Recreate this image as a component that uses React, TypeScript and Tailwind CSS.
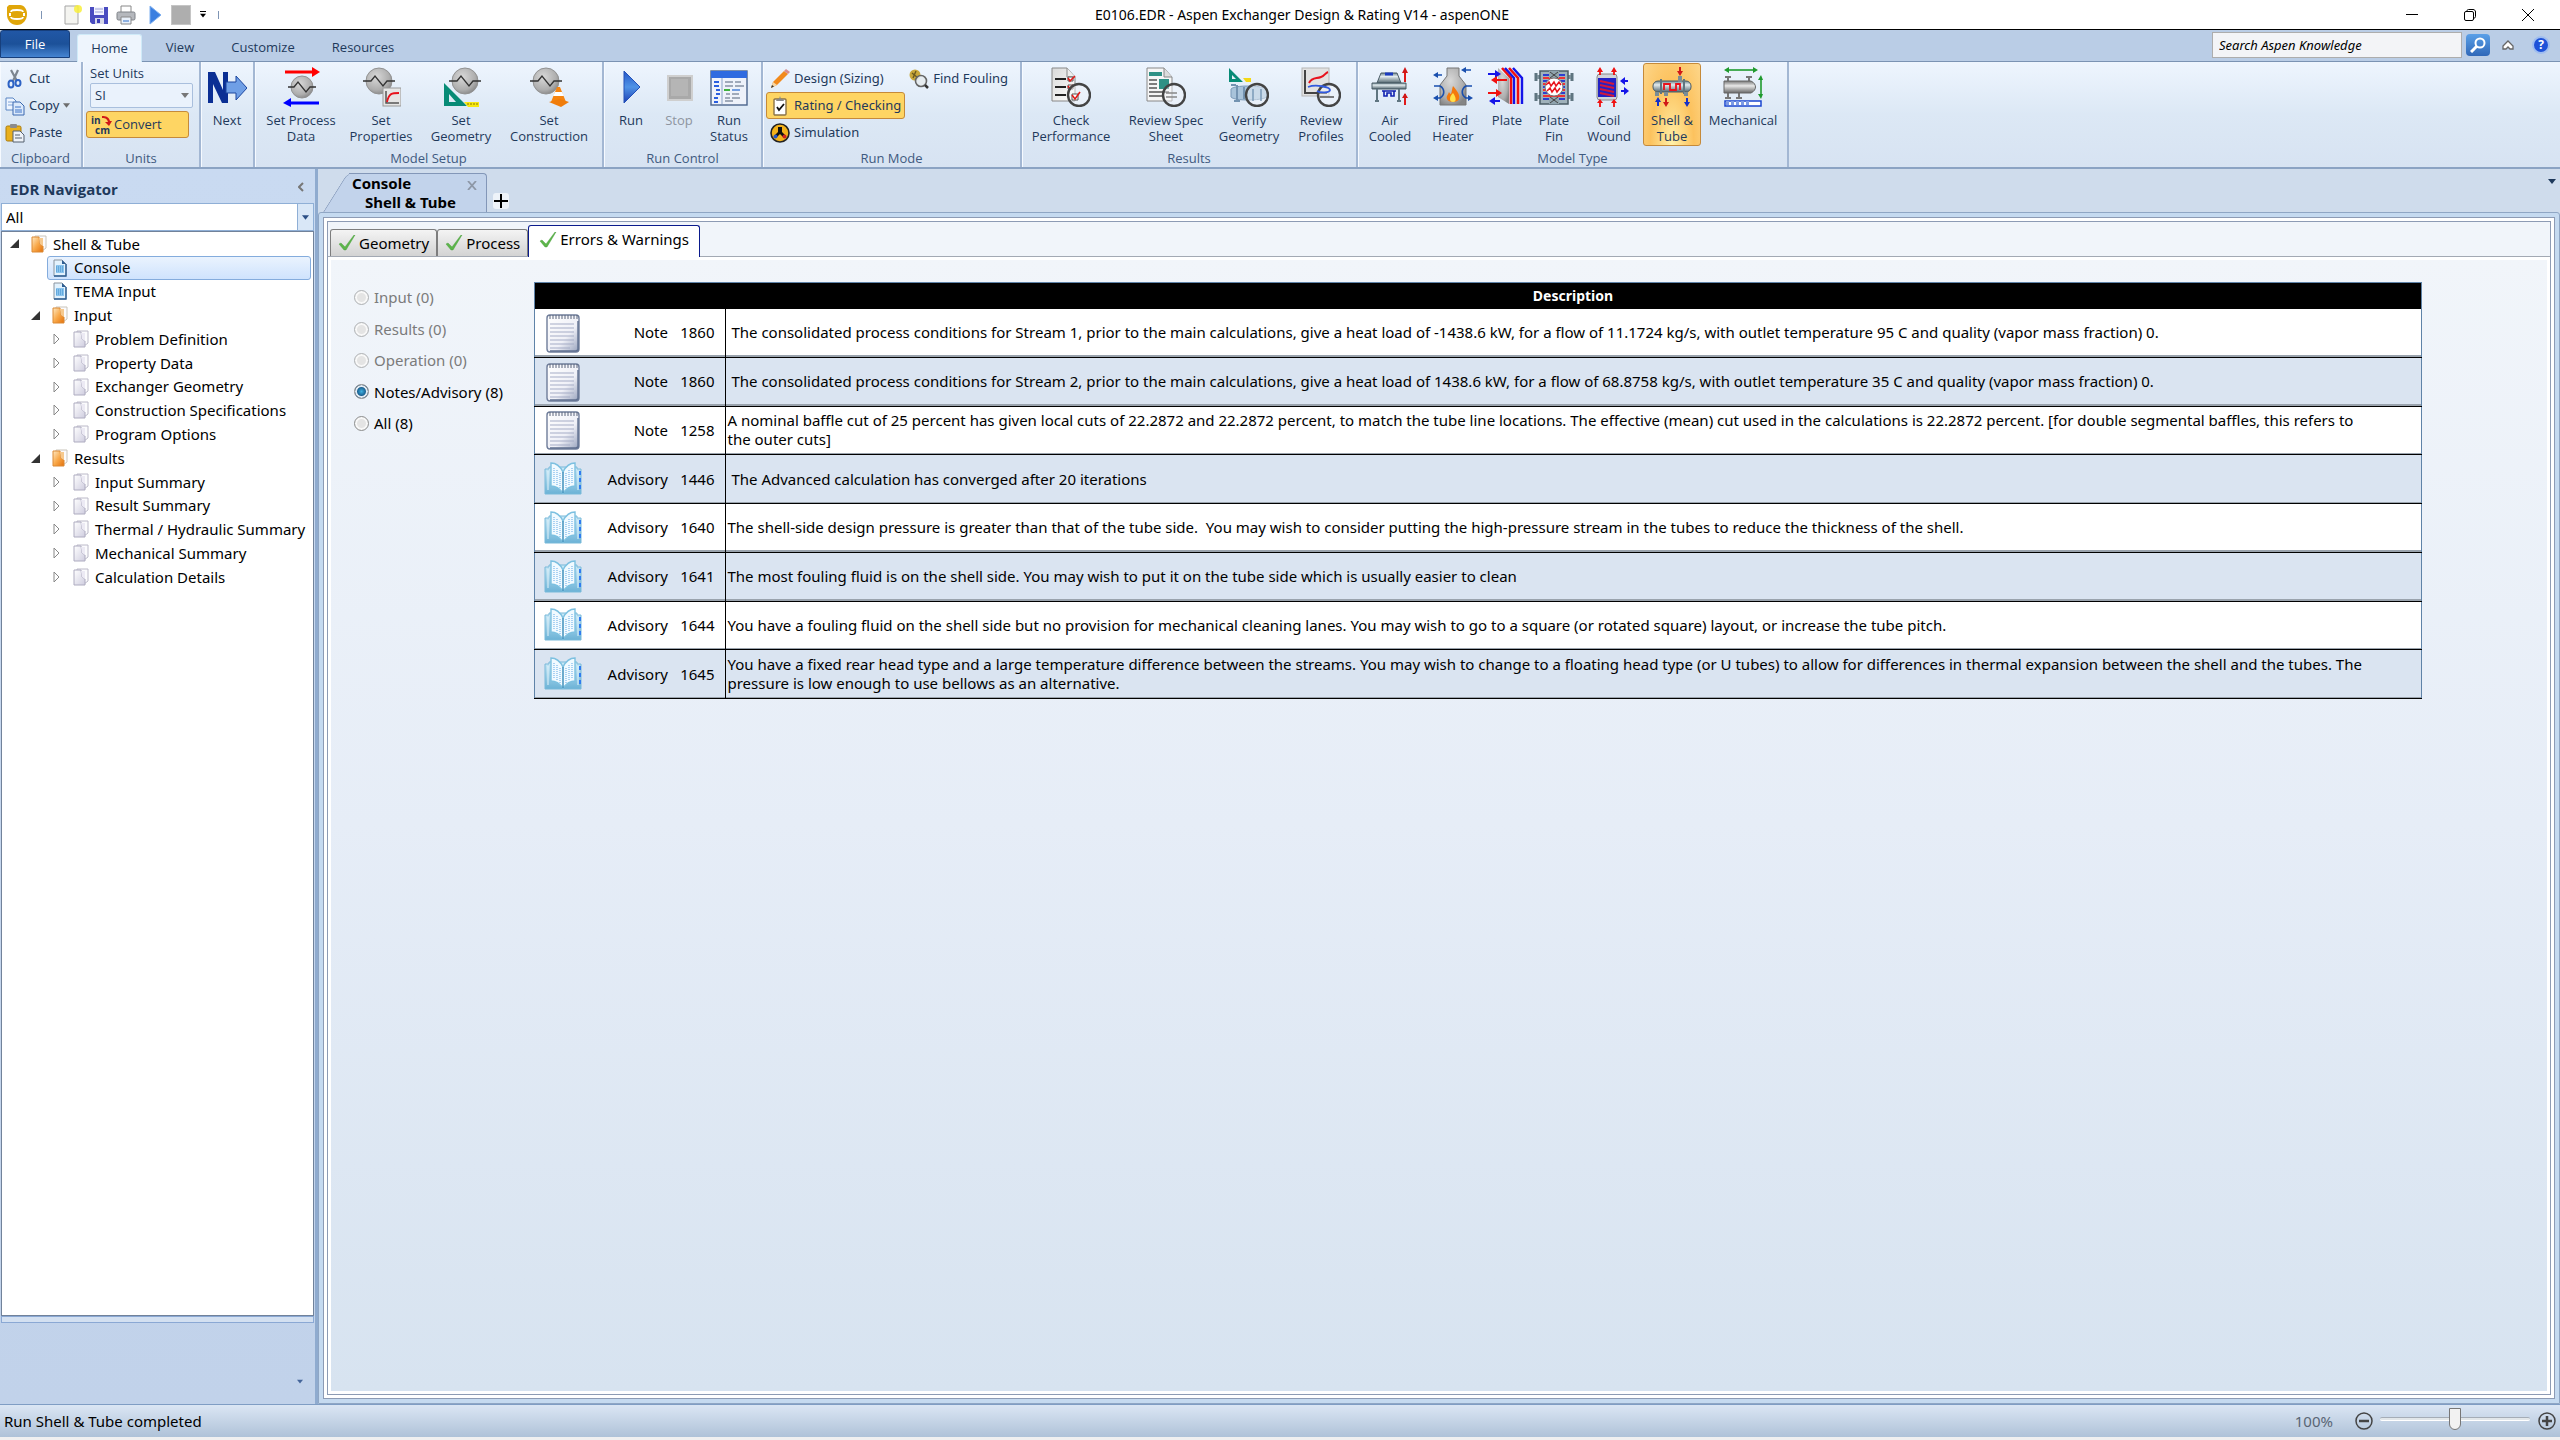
import type { ReactNode } from "react";
import { useState } from "react";

/* ---------- shared icon parts ---------- */

function Gradients() {
	return (
		<svg width="0" height="0" className="absolute" aria-hidden="true">
			<defs>
				<radialGradient id="sphere" cx="0.4" cy="0.35" r="0.7">
					<stop offset="0" stopColor="#d8d8d8" />
					<stop offset="0.7" stopColor="#aeaeae" />
					<stop offset="1" stopColor="#858585" />
				</radialGradient>
				<linearGradient id="steel" x1="0" y1="0" x2="0" y2="1">
					<stop offset="0" stopColor="#6f8790" />
					<stop offset="0.35" stopColor="#e2ebee" />
					<stop offset="1" stopColor="#52666f" />
				</linearGradient>
				<linearGradient id="gray" x1="0" y1="0" x2="0" y2="1">
					<stop offset="0" stopColor="#777" />
					<stop offset="0.4" stopColor="#e8e8e8" />
					<stop offset="1" stopColor="#666" />
				</linearGradient>
				<linearGradient id="blue" x1="0" y1="0" x2="0" y2="1">
					<stop offset="0" stopColor="#2456c8" />
					<stop offset="0.5" stopColor="#4f93e6" />
					<stop offset="1" stopColor="#1d3fb4" />
				</linearGradient>
				<linearGradient id="paper" x1="0" y1="0" x2="1" y2="1">
					<stop offset="0" stopColor="#d9d9d9" />
					<stop offset="1" stopColor="#ffffff" />
				</linearGradient>
				<linearGradient id="orange" x1="0" y1="0" x2="1" y2="1">
					<stop offset="0" stopColor="#fde9c4" />
					<stop offset="0.5" stopColor="#f9a94a" />
					<stop offset="1" stopColor="#e2700b" />
				</linearGradient>
				<linearGradient id="lilac" x1="0" y1="0" x2="1" y2="1">
					<stop offset="0" stopColor="#ffffff" />
					<stop offset="1" stopColor="#cfcddf" />
				</linearGradient>
				<linearGradient id="notepad" x1="0" y1="0" x2="1" y2="1">
					<stop offset="0" stopColor="#ffffff" />
					<stop offset="0.6" stopColor="#eff0f7" />
					<stop offset="1" stopColor="#95a0bb" />
				</linearGradient>
				<linearGradient id="book" x1="0" y1="0" x2="0" y2="1">
					<stop offset="0" stopColor="#cdeaf7" />
					<stop offset="1" stopColor="#6bb2d6" />
				</linearGradient>
			</defs>
		</svg>
	);
}

function Icon40({ children }: { children: ReactNode }) {
	return (
		<svg viewBox="0 0 40 40" className="size-10 shrink-0" aria-hidden="true">
			{children}
		</svg>
	);
}

function Icon20({ children }: { children: ReactNode }) {
	return (
		<svg viewBox="0 0 20 20" className="size-5 shrink-0" aria-hidden="true">
			{children}
		</svg>
	);
}

function Sphere({ cx, cy, r = 13 }: { cx: number; cy: number; r?: number }) {
	return (
		<g>
			<circle cx={cx} cy={cy} r={r} fill="url(#sphere)" stroke="#929292" />
			<path
				d={`M${cx - r - 3} ${cy}h${r - 5}l4 -5l8 10l4 -5h${r - 5}`}
				fill="none"
				stroke="#333"
				strokeWidth="1.3"
			/>
		</g>
	);
}

function Loupe() {
	return (
		<circle cx="28" cy="28" r="11" fill="#f4f6fa" fillOpacity="0.45" stroke="#444" strokeWidth="2.4" />
	);
}

/* ---------- ribbon icons ---------- */

const NextIcon = () => (
	<Icon40>
		<path d="M1 5h7l8 18V5h5v31h-6L6 17v19H1z" fill="#0b2f94" />
		<path d="M19 15h10V9l11 12l-11 12v-7H19z" fill="#6f9fe6" stroke="#1c469f" />
	</Icon40>
);

const ProcessDataIcon = () => (
	<Icon40>
		<path d="M4 5h29" stroke="#f00" strokeWidth="3" />
		<path d="M31 0l8 5l-8 5z" fill="#f00" />
		<Sphere cx={21} cy={20} r={11} />
		<path d="M9 36h29" stroke="#00f" strokeWidth="3" />
		<path d="M10 31l-8 5l8 4z" fill="#00f" />
	</Icon40>
);

const PropertiesIcon = () => (
	<Icon40>
		<Sphere cx={18} cy={14} />
		<rect x="22" y="21" width="18" height="18" fill="#e5e5e5" stroke="#999" />
		<path d="M25 24v12h13" fill="none" stroke="#555" strokeWidth="1.5" />
		<path d="M26 35c2-9 5-9 12-9" fill="none" stroke="#e8121c" strokeWidth="1.8" />
	</Icon40>
);

const GeometryIcon = () => (
	<Icon40>
		<Sphere cx={24} cy={14} />
		<path d="M3 16v23h23zm5 11l7 8H8z" fill="#078b76" fillRule="evenodd" />
		<path d="M23 35h15v5H27z" fill="#f7e811" />
		<path d="M27 36v2m3-2v2m3-2v2m3-2v2" stroke="#8a7a00" />
	</Icon40>
);

const ConstructionIcon = () => (
	<Icon40>
		<Sphere cx={17} cy={14} />
		<path d="M28 20h3l6 15H22z" fill="#f58410" />
		<path d="M26 25h7l2 4H24z" fill="#fff" />
		<path d="M20 35l11-3l9 3l-8 5z" fill="#f07c0a" />
	</Icon40>
);

const RunIcon = () => (
	<Icon40>
		<path d="M13 4l16 16l-16 16z" fill="url(#blue)" stroke="#2350b8" />
	</Icon40>
);

const StopIcon = () => (
	<Icon40>
		<rect x="9" y="9" width="24" height="24" fill="#a9a9a9" stroke="#cfcfcf" strokeWidth="2" />
		<rect x="12" y="12" width="17" height="17" fill="#b5b5b5" />
	</Icon40>
);

const StatusIcon = () => (
	<Icon40>
		<rect x="2" y="4" width="36" height="34" fill="#eef2fa" stroke="#4a648c" strokeWidth="1.4" />
		<path d="M2 4h36v7H2z" fill="#2f6be0" />
		<path d="M13 11v26" stroke="#8aa3c8" />
		<path d="M5 15h5M5 19h5M7 23h4M7 27h4M5 31h4M5 35h4" stroke="#2a5fe0" strokeWidth="2" />
		<path d="M16 15h8m2 0h6M16 19h8m2 0h9M17 27h4m2 0h7M16 31h5m2 0h8M16 34h8" stroke="#8793a5" strokeWidth="1.5" />
		<path d="M15 23h6" stroke="#3db23d" strokeWidth="2" />
		<path d="M23 23h8" stroke="#4a83d8" strokeWidth="1.5" />
	</Icon40>
);

const CheckPerfIcon = () => (
	<Icon40>
		<path d="M1 1h15l8 9v24H1z" fill="url(#paper)" stroke="#888" />
		<path d="M16 1v9h8" fill="#eee" stroke="#888" />
		<path d="M4 12h11M4 20h11M4 28h11" stroke="#222" strokeWidth="2" />
		<path d="M17 10h5v4h-5zM17 18h5v4h-5z" fill="#fff" stroke="#555" />
		<path d="M17 11l2 3l5-5M17 19l2 3l3-4" fill="none" stroke="#e01a1a" strokeWidth="1.6" />
		<Loupe />
		<path d="M21 27h6v6h-6z" fill="#fff" stroke="#555" />
		<path d="M21 28l3 4l5-7" fill="none" stroke="#e01a1a" strokeWidth="1.6" />
	</Icon40>
);

const SpecSheetIcon = () => (
	<Icon40>
		<path d="M1 1h17l8 9v24H1z" fill="#f6f6f6" stroke="#888" />
		<path d="M18 1v9h8" fill="#ddd" stroke="#888" />
		<path d="M3 5h13v4H3zM13 12h10v10H13z" fill="#2f9185" />
		<path d="M3 13h8M3 17h8M3 21h8M3 25h20M3 29h14" stroke="#555" strokeWidth="1.7" />
		<Loupe />
		<path d="M20 26h11M20 30h11" stroke="#888" strokeWidth="1.5" />
	</Icon40>
);

const VerifyIcon = () => (
	<Icon40>
		<path d="M0 1v14h14zm3 7l4 4H3z" fill="#078b76" fillRule="evenodd" />
		<path d="M14 11h8v4h-5z" fill="#f3d817" />
		<path d="M2 22c3-4 30-4 36 0v8c-6 4-33 4-36 0z" fill="#a8c3da" stroke="#7b9ab8" />
		<path d="M8 18v16M5 34h6M15 20v12M2 18h5" stroke="#7393b1" strokeWidth="2" />
		<Loupe />
		<path d="M24 22v12M32 22v12" stroke="#7b9ab8" strokeWidth="1.5" />
	</Icon40>
);

const ProfilesIcon = () => (
	<Icon40>
		<rect x="1" y="1" width="27" height="28" fill="#e2e2e2" stroke="#b5b5b5" />
		<path d="M4 3v23h22" fill="none" stroke="#444" strokeWidth="2" />
		<path d="M8 16c3-6 7-4 12-6c4-1 4-4 7-5" fill="none" stroke="#e8121c" strokeWidth="2" />
		<Loupe />
		<path d="M7 20c8-3 22 0 22 3s-10 3-13 1" fill="none" stroke="#3159dd" strokeWidth="1.8" />
		<path d="M19 30h14" stroke="#555" strokeWidth="1.5" />
	</Icon40>
);

const AirIcon = () => (
	<Icon40>
		<path d="M11 6h16l4 10H7z" fill="url(#steel)" stroke="#4a5c66" />
		<path d="M15 7h8" stroke="#1a3bc0" strokeWidth="3" />
		<path d="M2 16h34v6H2z" fill="url(#steel)" stroke="#4a5c66" />
		<path d="M7 22v12M29 22v12M5 34h4M27 34h4" stroke="#5f7580" strokeWidth="2" />
		<path d="M12 24h14M14 24v5h3v-3h4v3h3v-5" fill="none" stroke="#1020b0" strokeWidth="1.6" />
		<path d="M35 15V4M35 38V27" stroke="#e01a1a" strokeWidth="2" />
		<path d="M32 6l3-6l3 6zM32 31l3-5l3 5z" fill="#d01818" />
	</Icon40>
);

const HeaterIcon = () => (
	<Icon40>
		<path d="M14 1h12v8l7 9v20H7V18l7-9z" fill="url(#sphere)" stroke="#777" />
		<path d="M20 19c5 6 7 9 6 13c-1 4-11 4-12 0c-1-3 1-4 2-7c1 2 2 2 2 2c1-3 1-5 2-8z" fill="#f4780d" />
		<path d="M20 26c3 4 4 9 0 9s-4-5 0-9z" fill="#ffe14a" />
		<path d="M9 8H3M38 3h-6M1 19h6c5 3 5 9 0 12H3M39 19h-6c-5 3-5 9 0 12h4" fill="none" stroke="#194fae" strokeWidth="1.6" />
		<path d="M5 5v6L0 8zM33 0v6l-5-3zM5 28v6l-5-3zM35 28v6l5-3z" fill="#194fae" />
	</Icon40>
);

const PlateIcon = () => (
	<Icon40>
		<path d="M11 1l11 10v26l-11-7z" fill="url(#sphere)" />
		<path d="M15 1l9 10v26M22 1l9 10v26" fill="none" stroke="#f01010" strokeWidth="2.6" />
		<path d="M18 1l9 10v26M26 1l9 10v26" fill="none" stroke="#1414e8" strokeWidth="2.4" />
		<path d="M1 7h9M4 34h9" stroke="#1414e8" strokeWidth="2" />
		<path d="M8 3l6 4l-6 4zM8 30l-6 4l6 4z" fill="#1414e8" />
		<path d="M6 13h14M1 26h10" stroke="#f01010" strokeWidth="2" />
		<path d="M10 9l-6 4l6 4zM9 22l6 4l-6 4z" fill="#f01010" />
	</Icon40>
);

const PlateFinIcon = () => (
	<Icon40>
		<path d="M2 6v8M2 26v8M38 6v8M38 26v8" stroke="#5f7580" strokeWidth="3" />
		<path d="M3 10h34M3 30h34" stroke="#7d929c" strokeWidth="4" />
		<rect x="6" y="4" width="28" height="33" fill="#9fb1ba" stroke="#4a5c66" strokeWidth="1.5" />
		<path d="M9 8h22M9 14h22M9 20h22M9 26h22M9 32h22" stroke="#2d3ed0" strokeWidth="1.8" />
		<path d="M9 11h22M9 17h22M9 23h22M9 29h22" stroke="#e33" strokeWidth="1.8" />
		<path d="M15 4h10v7H15zM15 30h10v7H15z" fill="#8fa3ad" />
		<path d="M16 5l8 6M24 5l-8 6M16 30l8 6M24 30l-8 6" stroke="#444" />
		<circle cx="20" cy="20" r="9" fill="#fff" stroke="#777" />
		<path d="M12 18l3-3l2 4l3-4l2 4l3-4l2 3M13 24l3-3l2 4l3-4l2 4l3-4" fill="none" stroke="#e8121c" strokeWidth="1.5" />
	</Icon40>
);

const CoilIcon = () => (
	<Icon40>
		<rect x="8" y="7" width="20" height="26" rx="3" fill="#cfd3da" stroke="#888" />
		<rect x="9" y="11" width="18" height="19" fill="#2222c4" />
		<path d="M11 14l14 3M11 18l14 3M11 22l14 3M11 26l14 3" stroke="#d4183a" strokeWidth="2.2" />
		<path d="M11 8V2M25 8V2M11 40v-6M25 40v-6" stroke="#f01010" strokeWidth="1.8" />
		<path d="M8 5l3-5l3 5zM22 5l3-5l3 5zM8 36l3-4l3 4zM22 36l3-4l3 4z" fill="#f01010" />
		<path d="M34 14h5M32 24h4" stroke="#1414e8" strokeWidth="2" />
		<path d="M36 10l-5 4l5 4zM35 20l5 4l-5 4z" fill="#1414e8" />
	</Icon40>
);

const ShellTubeIcon = () => (
	<Icon40>
		<rect x="1" y="14" width="38" height="11" rx="5" fill="url(#steel)" stroke="#4a5c66" />
		<path d="M9 12v15M32 12v15" stroke="#5f7580" strokeWidth="2" />
		<path d="M28 9v6M5 25v4M14 25v4M34 25v4" stroke="#7a8d96" strokeWidth="4" />
		<path d="M12 23v-6h6v6h6v-6h4v6" fill="none" stroke="#e8121c" strokeWidth="1.8" />
		<path d="M28 0v6M14 31v5" stroke="#d01818" strokeWidth="2" />
		<path d="M25 4l3 5l3-5zM11 35l3 5l3-5z" fill="#d01818" />
		<path d="M6 39v-5M35 31v5" stroke="#1430c8" strokeWidth="2" />
		<path d="M3 35l3-5l3 5zM32 35l3 5l3-5z" fill="#1430c8" />
	</Icon40>
);

const MechanicalIcon = () => (
	<Icon40>
		<path d="M5 3h26" stroke="#1f9a2e" strokeWidth="1.6" />
		<path d="M6 0v6l-5-3zM30 0v6l5-3zM35 13l3-5l2 5zM35 27l3 5l2-5z" fill="#1f9a2e" />
		<path d="M38 11v18" stroke="#1f9a2e" strokeWidth="1.6" />
		<path d="M5 10v5M26 10v5M5 25v5M16 25v5M2 10h6M23 10h6M2 31h6M13 31h6" stroke="#777" strokeWidth="2" />
		<path d="M1 14h27c6 3 6 9 0 12H1z" fill="url(#gray)" stroke="#666" />
		<path d="M2 34h36v5H2z" fill="#fff" stroke="#1a46d0" strokeWidth="1.5" />
		<path d="M3 36h25" stroke="#7c9ae4" strokeWidth="4" strokeDasharray="3 2" />
	</Icon40>
);

const CutIcon = () => (
	<Icon20>
		<path d="M6 1l6 11M13 1L8 12" stroke="#7c8590" strokeWidth="2.2" />
		<ellipse cx="6" cy="15" rx="2.5" ry="3.5" fill="none" stroke="#2d62c4" strokeWidth="2" />
		<ellipse cx="13" cy="14" rx="2.5" ry="3" fill="none" stroke="#2d62c4" strokeWidth="2" />
	</Icon20>
);

const CopyIcon = () => (
	<Icon20>
		<path d="M1 2h7l3 3v9H1z" fill="#eef5ff" stroke="#5b86c4" />
		<path d="M3 6h5M3 9h5" stroke="#7fa3d8" />
		<path d="M8 6h7l4 4v9H8z" fill="#dbe9fb" stroke="#3a68b0" />
		<path d="M10 11h6M10 14h7M10 16h7" stroke="#3f74c8" />
	</Icon20>
);

const PasteIcon = () => (
	<Icon20>
		<rect x="1" y="3" width="15" height="15" rx="1.5" fill="#e9b01d" stroke="#a97a0d" />
		<rect x="5" y="1" width="7" height="4" rx="1" fill="#8c8c8c" />
		<path d="M8 8h7l4 4v7H8z" fill="#eef2f8" stroke="#55606f" />
		<path d="M10 12h5M10 15h7" stroke="#55606f" />
	</Icon20>
);

const PencilIcon = () => (
	<Icon20>
		<path d="M1 19l2-6L14 2l4 3L7 16z" fill="#f28a1c" />
		<path d="M14 2l2-2l4 3l-2 2z" fill="#d98d8d" />
		<path d="M1 19l2-6l4 3z" fill="#f5d8a8" />
		<path d="M1 19l1-3l2 1.500z" fill="#333" />
	</Icon20>
);

const ClipboardIcon = () => (
	<Icon20>
		<rect x="4" y="3" width="12" height="16" rx="1" fill="#fff" stroke="#8b7347" strokeWidth="1.4" />
		<path d="M6 5h8l-1-2h-2l-1-3l-1 3H7z" fill="#888" />
		<path d="M7 11l2 3l5-6" fill="none" stroke="#111" strokeWidth="1.8" />
	</Icon20>
);

const SimulationIcon = () => (
	<Icon20>
		<circle cx="10" cy="10" r="9" fill="#f4b21a" stroke="#222" strokeWidth="1.6" />
		<path d="M8 4h4v5l4 4l-2 2l-4-4l-4 4l-2-2l4-4z" fill="#111" />
		<circle cx="5.500" cy="13.500" r="2" fill="#2556c8" />
		<circle cx="14.500" cy="13.500" r="2" fill="#c22" />
	</Icon20>
);

const FoulingIcon = () => (
	<Icon20>
		<circle cx="6" cy="6" r="5.500" fill="#c9a83a" />
		<path d="M3 4l6 5M7 2L4 9" stroke="#6b5a20" strokeWidth="1.4" />
		<circle cx="12" cy="12" r="5.500" fill="#e6ebee" fillOpacity="0.9" stroke="#666" strokeWidth="1.6" />
		<path d="M16 16l3 3" stroke="#333" strokeWidth="2.5" />
	</Icon20>
);

/* ---------- tree and table icons ---------- */

function FolderIcon({ gray }: { gray?: boolean }) {
	return (
		<svg viewBox="0 0 16 18" className="h-[18px] w-4 shrink-0" aria-hidden="true">
			<path d="M4 1h11v12l-4 3H4z" fill="#fbfbfd" stroke={gray ? "#bcbac9" : "#c9c4bb"} />
			<path
				d="M1 2h7l1 7l3 2v6H1z"
				fill={gray ? "url(#lilac)" : "url(#orange)"}
				stroke={gray ? "#aeacc0" : "#dc8a35"}
			/>
			<path d="M8 3l1 6l3 2V3z" fill={gray ? "#eceaf4" : "#f6c98e"} />
		</svg>
	);
}

const DocIcon = () => (
	<svg viewBox="0 0 16 18" className="h-[18px] w-4 shrink-0" aria-hidden="true">
		<path d="M2 1h8l4 4v12H2z" fill="#e3f2fd" stroke="#8a949f" />
		<path d="M14 5v12H2" fill="none" stroke="#2d5f95" strokeWidth="1.4" />
		<path d="M10 1v4h4z" fill="#2d5f95" />
		<path d="M4 6h8v8H4z" fill="#8cc5ee" />
		<path d="M4 8h8M4 10h8M4 12h8" stroke="#3d8ccb" strokeDasharray="1 1" />
	</svg>
);

const NoteIcon = () => (
	<svg viewBox="0 0 36 40" className="h-10 w-9" aria-hidden="true">
		<rect x="2" y="2" width="32" height="37" rx="3" fill="url(#notepad)" stroke="#6f7d9a" strokeWidth="1.4" />
		<path d="M33 8v29l-2 1H5" fill="none" stroke="#5f6f8f" strokeWidth="1.4" />
		<path d="M5 2v4M8 2v4M11 2v4M14 2v4M17 2v4M20 2v4M23 2v4M26 2v4M29 2v4M32 2v4" stroke="#5a647a" />
		<path d="M5 11h24M5 15h24M5 19h24M5 23h24M5 27h24M5 31h24M5 35h20" stroke="#a5acc6" />
	</svg>
);

const BookIcon = () => (
	<svg viewBox="0 0 38 34" className="h-[34px] w-[38px]" aria-hidden="true">
		<path d="M1 7h4V5h28v2h4v25H1z" fill="url(#book)" stroke="#79b9d9" />
		<path d="M19 10C16 4 11 1 7 1v23c5 0 9 3 12 7c3-4 7-7 12-7V1c-4 0-9 3-12 9z" fill="#f1faff" stroke="#7cc0e0" strokeWidth="1.4" />
		<path d="M19 10v21" stroke="#4b97c0" strokeWidth="1.6" />
		<path d="M4 9v19M34 9v19" stroke="#e4f4fb" />
		<path d="M10 6v16M13 8v16M16 11v15M22 11v15M25 8v16M28 6v16" stroke="#8cc0ee" strokeWidth="1.4" strokeDasharray="1 1" />
		<path d="M36 9v4M36 16v4M36 23v4" stroke="#2f7cf0" strokeWidth="2" />
	</svg>
);

const CheckMark = () => (
	<svg viewBox="0 0 18 16" className="h-4 w-[18px] shrink-0" aria-hidden="true">
		<path d="M1 9l2-1l4 4L16 0h1L8 15H6z" fill="#5cb54a" stroke="#46993a" strokeWidth="0.4" />
	</svg>
);

function Triangle({ className = "w-2" }: { className?: string }) {
	return (
		<svg viewBox="0 0 8 5" className={`h-[5px] ${className}`} aria-hidden="true">
			<path d="M0 0h8L4 5z" fill="currentColor" />
		</svg>
	);
}

/* ---------- title bar ---------- */

function TitleBar() {
	return (
		<header className="flex h-[30px] items-center border-b border-black bg-white">
			<div className="flex flex-1 items-center">
				<svg viewBox="0 0 20 20" className="ml-[7px] size-5" aria-label="aspenONE">
					<path d="M2 0h11c4 0 7 4 7 9c0 6-4 11-10 11C4 20 0 15 0 10V2z" fill="#e0a60a" />
					<path d="M4 7c0-2 3-2 6-2s6 0 6 2M4 12c0 2 3 2 6 2s6 0 6-2" fill="none" stroke="#fff" strokeWidth="1.8" />
					<path d="M3 8v3M17 8v3" stroke="#fff" strokeWidth="2" />
				</svg>
				<span className="ml-[14px] h-2 w-px bg-[#7f95b5]" />
				<button type="button" aria-label="New" className="ml-5">
					<svg viewBox="0 0 20 20" className="size-5">
						<path d="M3 1h13v18H3z" fill="#f4f4f0" stroke="#a5a5a5" />
						<circle cx="16" cy="4" r="4" fill="#f8ef3a" fillOpacity="0.85" />
					</svg>
				</button>
				<button type="button" aria-label="Save" className="ml-[7px]">
					<svg viewBox="0 0 20 20" className="size-5">
						<path d="M1 2h18v17H3l-2-2z" fill="#4a4cc0" />
						<path d="M5 2h10v8H5z" fill="#f4f4ff" />
						<path d="M6 4h8M6 7h8" stroke="#9aa0d8" />
						<path d="M6 13h9v6H6z" fill="#d5d7e8" />
						<path d="M8 14h3v4H8z" fill="#3d3fb8" />
					</svg>
				</button>
				<button type="button" aria-label="Print" className="ml-[7px]">
					<svg viewBox="0 0 20 20" className="size-5">
						<path d="M5 1h10v7H5z" fill="#fff" stroke="#888" />
						<rect x="1" y="7" width="18" height="8" rx="1.5" fill="#b5b8bd" stroke="#7e8288" />
						<path d="M5 12h10v7H5z" fill="#e8f0fa" stroke="#888" />
						<path d="M7 16h6" stroke="#6f9bd8" strokeWidth="1.5" />
					</svg>
				</button>
				<button type="button" aria-label="Run" className="ml-[9px]">
					<svg viewBox="0 0 20 20" className="size-5">
						<path d="M5 1l11 9L5 19z" fill="#3b7fe0" stroke="#7fb0f0" />
					</svg>
				</button>
				<button type="button" aria-label="Stop" className="ml-[6px]">
					<span className="block size-5 border border-[#c5c5c5] bg-[#aeaeae]" />
				</button>
				<button type="button" aria-label="Customize toolbar" className="ml-[9px] text-black">
					<span className="mb-px block h-px w-[6px] bg-black" />
					<Triangle className="w-[6px]" />
				</button>
				<span className="ml-3 h-2 w-px bg-[#7f95b5]" />
			</div>
			<h1 className="pl-[70px] font-['Noto_Sans',sans-serif] text-sm text-black">
				E0106.EDR - Aspen Exchanger Design &amp; Rating V14 - aspenONE
			</h1>
			<div className="flex flex-1 items-center justify-end gap-[46px] pr-[26px]">
				<button type="button" aria-label="Minimize">
					<span className="block h-px w-3 bg-black" />
				</button>
				<button type="button" aria-label="Restore">
					<svg viewBox="0 0 12 12" className="size-3" fill="none" stroke="#000">
						<rect x="0.500" y="2.500" width="9" height="9" rx="1.500" />
						<path d="M3 2.500V2c0-1 0.500-1.500 1.500-1.500H9c1.500 0 2.500 1 2.500 2.500v4.500c0 1-0.500 1.500-1.500 1.500" />
					</svg>
				</button>
				<button type="button" aria-label="Close">
					<svg viewBox="0 0 12 12" className="size-3" fill="none" stroke="#000">
						<path d="M0 0l12 12M12 0L0 12" />
					</svg>
				</button>
			</div>
		</header>
	);
}

/* ---------- ribbon ---------- */

function RibbonTabs() {
	return (
		<nav className="flex h-8 items-end border-b border-[#7b93b3] bg-[#bacde6] text-[13px]">
			<button
				type="button"
				className="mb-[3px] h-7 w-[70px] rounded-t-[3px] border border-[#173f7c] bg-linear-to-b from-[#2157a6] via-[#1c5199] to-[#4584d2] pt-px text-white"
			>
				File
			</button>
			<button
				type="button"
				className="-mb-px ml-[7px] h-7 w-[65px] rounded-t-[3px] border border-b-0 border-[#cfeaf8] bg-[#eef5fd]"
			>
				Home
			</button>
			<button type="button" className="h-[26px] w-[76px]">
				View
			</button>
			<button type="button" className="h-[26px] w-[90px]">
				Customize
			</button>
			<button type="button" className="h-[26px] w-[110px]">
				Resources
			</button>
			<div className="mb-[3px] ml-auto flex items-center pr-[10px]">
				<input
					aria-label="Search Aspen Knowledge"
					placeholder="Search Aspen Knowledge"
					className="h-[26px] w-[250px] border border-[#adadad] bg-[#f3f4f7] px-[6px] font-['Noto_Sans',sans-serif] text-black italic placeholder:text-black"
				/>
				<button
					type="button"
					aria-label="Search"
					className="ml-1 grid h-[22px] w-6 place-items-center rounded-sm bg-linear-to-b from-[#5aa0e8] to-[#3068b8]"
				>
					<svg viewBox="0 0 16 16" className="size-4" fill="none" stroke="#fff" strokeWidth="2">
						<circle cx="10" cy="6" r="4.500" />
						<path d="M7 9l-6 6" strokeWidth="3" />
					</svg>
				</button>
				<button type="button" aria-label="Collapse ribbon" className="ml-3">
					<svg viewBox="0 0 12 10" className="h-[10px] w-3" fill="#fff" stroke="#666" strokeWidth="1.3">
						<path d="M1 6l5-5l5 5v3H8L6 7L4 9H1z" />
					</svg>
				</button>
				<button
					type="button"
					aria-label="Help"
					className="ml-[18px] size-[18px] rounded-full border-2 border-[#9fbdf0] bg-[#1f52d8] text-[12px] leading-3 font-bold text-white"
				>
					?
				</button>
			</div>
		</nav>
	);
}

function Group({
	label,
	width,
	children,
}: {
	label: string;
	width: string;
	children: ReactNode;
}) {
	return (
		<section
			className={`flex shrink-0 flex-col border-r-2 border-[#a3b7d3] shadow-[inset_1px_0_0_#f6faff] ${width}`}
		>
			<div className="flex flex-1">{children}</div>
			<div className="h-[18px] text-center leading-[18px] text-[#3f5a80]">{label}</div>
		</section>
	);
}

function BigButton({
	icon,
	lines,
	width,
	active,
	disabled,
}: {
	icon: ReactNode;
	lines: string[];
	width: string;
	active?: boolean;
	disabled?: boolean;
}) {
	return (
		<div className={`flex justify-center pt-px ${width}`}>
			<button
				type="button"
				disabled={disabled}
				className={`flex h-[83px] flex-col items-center rounded-[3px] border pt-[3px] leading-4 whitespace-nowrap ${
					active
						? "w-[58px] border-[#c58a3a] bg-[radial-gradient(ellipse_at_bottom,#fff0a8,#fcc25e_55%,#fdd68a)]"
						: "border-transparent"
				} ${disabled ? "text-[#8e959f]" : ""}`}
			>
				{icon}
				<span className="pt-[5px]">
					{lines.map((line) => (
						<span key={line} className="block">
							{line}
						</span>
					))}
				</span>
			</button>
		</div>
	);
}

function SmallButton({
	icon,
	label,
	active,
}: {
	icon: ReactNode;
	label: string;
	active?: boolean;
}) {
	return (
		<button
			type="button"
			className={`flex h-[27px] items-center gap-1 rounded-[3px] border px-[3px] font-['Noto_Sans',sans-serif] whitespace-nowrap ${
				active ? "border-[#c58a3a] bg-[#fed563]" : "border-transparent"
			}`}
		>
			{icon}
			{label}
		</button>
	);
}

function Ribbon() {
	return (
		<div className="flex h-[107px] border-b-2 border-[#8ba3c3] bg-linear-to-b from-[#eef5fe] via-[#dce8f5] to-[#d7e3f2] text-[13px]">
			<Group label="Clipboard" width="w-[83px]">
				<div className="flex flex-col pt-[3px] pl-px">
					<SmallButton icon={<CutIcon />} label="Cut" />
					<div className="flex items-center">
						<SmallButton icon={<CopyIcon />} label="Copy" />
						<Triangle className="w-[7px] text-[#6d6d6d]" />
					</div>
					<SmallButton icon={<PasteIcon />} label="Paste" />
				</div>
			</Group>
			<Group label="Units" width="w-[118px]">
				<div className="flex flex-col px-[3px] pt-[3px]">
					<label htmlFor="units" className="pl-1 leading-4">
						Set Units
					</label>
					<div className="mt-[2px] ml-1 grid items-center">
						<select
							id="units"
							className="h-[25px] w-[103px] appearance-none rounded-[2px] border border-[#a9bfdd] bg-[#eaf2fc] px-1 [grid-area:1/1]"
						>
							<option>SI</option>
						</select>
						<Triangle className="mr-1 w-2 justify-self-end text-[#777] [grid-area:1/1]" />
					</div>
					<button
						type="button"
						className="mt-[3px] flex h-[27px] w-[103px] items-center gap-[2px] rounded-[3px] border border-[#c58a3a] bg-[#fed563] pl-[3px]"
					>
						<svg viewBox="0 0 22 22" className="size-[22px] overflow-visible" aria-hidden="true">
							<text x="1" y="10" fontSize="10" fontWeight="bold" fill="#1e395b">in</text>
							<text x="5" y="20" fontSize="10" fontWeight="bold" fill="#1e395b">cm</text>
							<path d="M12 4c4 0 5 1 6 4h-3l4 4l3-5h-2c-1-4-4-5-8-5z" fill="#d01818" />
						</svg>
						Convert
					</button>
				</div>
			</Group>
			<Group label="" width="w-[54px]">
				<BigButton icon={<NextIcon />} lines={["Next"]} width="w-[52px]" />
			</Group>
			<Group label="Model Setup" width="w-[349px]">
				<BigButton icon={<ProcessDataIcon />} lines={["Set Process", "Data"]} width="w-[92px]" />
				<BigButton icon={<PropertiesIcon />} lines={["Set", "Properties"]} width="w-[68px]" />
				<BigButton icon={<GeometryIcon />} lines={["Set", "Geometry"]} width="w-[92px]" />
				<BigButton icon={<ConstructionIcon />} lines={["Set", "Construction"]} width="w-[84px]" />
			</Group>
			<Group label="Run Control" width="w-[159px]">
				<BigButton icon={<RunIcon />} lines={["Run"]} width="w-[54px]" />
				<BigButton icon={<StopIcon />} lines={["Stop"]} width="w-[42px]" disabled />
				<BigButton icon={<StatusIcon />} lines={["Run", "Status"]} width="w-[58px]" />
			</Group>
			<Group label="Run Mode" width="w-[259px]">
				<div className="flex flex-col items-start pt-[3px] pl-[3px]">
					<SmallButton icon={<PencilIcon />} label="Design (Sizing)" />
					<SmallButton icon={<ClipboardIcon />} label="Rating / Checking" active />
					<SmallButton icon={<SimulationIcon />} label="Simulation" />
				</div>
				<div className="pt-[3px]">
					<SmallButton icon={<FoulingIcon />} label="Find Fouling" />
				</div>
			</Group>
			<Group label="Results" width="w-[336px]">
				<BigButton icon={<CheckPerfIcon />} lines={["Check", "Performance"]} width="w-[98px]" />
				<BigButton icon={<SpecSheetIcon />} lines={["Review Spec", "Sheet"]} width="w-[92px]" />
				<BigButton icon={<VerifyIcon />} lines={["Verify", "Geometry"]} width="w-[74px]" />
				<BigButton icon={<ProfilesIcon />} lines={["Review", "Profiles"]} width="w-[70px]" />
			</Group>
			<Group label="Model Type" width="w-[431px]">
				<BigButton icon={<AirIcon />} lines={["Air", "Cooled"]} width="w-16" />
				<BigButton icon={<HeaterIcon />} lines={["Fired", "Heater"]} width="w-[62px]" />
				<BigButton icon={<PlateIcon />} lines={["Plate"]} width="w-[46px]" />
				<BigButton icon={<PlateFinIcon />} lines={["Plate", "Fin"]} width="w-12" />
				<BigButton icon={<CoilIcon />} lines={["Coil", "Wound"]} width="w-[62px]" />
				<BigButton icon={<ShellTubeIcon />} lines={["Shell &", "Tube"]} width="w-16" active />
				<BigButton icon={<MechanicalIcon />} lines={["Mechanical"]} width="w-[78px]" />
			</Group>
		</div>
	);
}

/* ---------- navigator ---------- */

type NavNode = {
	label: string;
	level: 0 | 1 | 2;
	kind: "folder" | "doc" | "group";
	selected?: boolean;
};

const NAV_NODES: NavNode[] = [
	{ label: "Shell & Tube", level: 0, kind: "folder" },
	{ label: "Console", level: 1, kind: "doc", selected: true },
	{ label: "TEMA Input", level: 1, kind: "doc" },
	{ label: "Input", level: 1, kind: "folder" },
	{ label: "Problem Definition", level: 2, kind: "group" },
	{ label: "Property Data", level: 2, kind: "group" },
	{ label: "Exchanger Geometry", level: 2, kind: "group" },
	{ label: "Construction Specifications", level: 2, kind: "group" },
	{ label: "Program Options", level: 2, kind: "group" },
	{ label: "Results", level: 1, kind: "folder" },
	{ label: "Input Summary", level: 2, kind: "group" },
	{ label: "Result Summary", level: 2, kind: "group" },
	{ label: "Thermal / Hydraulic Summary", level: 2, kind: "group" },
	{ label: "Mechanical Summary", level: 2, kind: "group" },
	{ label: "Calculation Details", level: 2, kind: "group" },
];

const INDENT = ["pl-0", "pl-[21px]", "pl-[42px]"];

function TreeRow({ node }: { node: NavNode }) {
	return (
		<li className={`flex min-h-0 flex-1 items-center ${INDENT[node.level]}`}>
			<span className="flex w-6 shrink-0 justify-center">
				{node.kind === "folder" && (
					<svg viewBox="0 0 9 9" className="size-[9px]" aria-hidden="true">
						<path d="M9 0v9H0z" fill="#333" />
					</svg>
				)}
				{node.kind === "group" && (
					<svg viewBox="0 0 7 12" className="h-3 w-[7px]" aria-hidden="true">
						<path d="M1 1l5 5l-5 5z" fill="#fff" stroke="#888" />
					</svg>
				)}
			</span>
			<button
				type="button"
				className={`flex h-full items-center gap-[6px] rounded-[3px] border pl-1 whitespace-nowrap ${
					node.selected
						? "mr-[2px] flex-1 border-[#84acdd] bg-linear-to-b from-[#eaf3fe] to-[#cfe3fd]"
						: "border-transparent"
				}`}
			>
				{node.kind === "doc" ? <DocIcon /> : <FolderIcon gray={node.kind === "group"} />}
				{node.label}
			</button>
		</li>
	);
}

function Navigator() {
	return (
		<aside className="flex w-[318px] shrink-0 flex-col border-r-[3px] border-[#8fabcf] bg-linear-to-b from-[#c9daf1] to-[#c1d2ea] px-px font-['Noto_Sans',sans-serif]">
			<div className="flex h-[34px] items-center justify-between pt-[6px] pr-[10px] pl-[9px]">
				<h2 className="font-['Open_Sans',sans-serif] text-[15px] font-bold">EDR Navigator</h2>
				<button type="button" aria-label="Collapse navigator" className="pb-1">
					<svg viewBox="0 0 6 10" className="h-[10px] w-[6px]" fill="none" stroke="#777" strokeWidth="2">
						<path d="M5 1L1 5l4 4" />
					</svg>
				</button>
			</div>
			<div className="grid items-center">
				<select
					aria-label="Filter"
					className="h-7 w-full appearance-none border border-[#8fafd6] bg-white px-1 text-[15px] text-black [grid-area:1/1]"
				>
					<option>All</option>
				</select>
				<span className="pointer-events-none grid h-full w-[17px] place-items-center justify-self-end border border-[#8fafd6] bg-[#d9e7f7] text-[#2c4f86] [grid-area:1/1]">
					<Triangle className="w-[7px]" />
				</span>
			</div>
			<div className="flex-1 border border-[#71829a] bg-white text-black">
				<ul className="flex h-[357px] flex-col text-[15px]">
					{NAV_NODES.map((node) => (
						<TreeRow key={node.label} node={node} />
					))}
				</ul>
			</div>
			<div className="h-[7px] border border-[#8aa8d4] bg-[#d3e0f1]" />
			<div className="flex h-[81px] items-end justify-end pr-[11px] pb-5 text-[#44659a]">
				<Triangle className="w-[6px]" />
			</div>
		</aside>
	);
}

/* ---------- errors and warnings page ---------- */

const FILTERS = [
	{ label: "Input (0)", enabled: false },
	{ label: "Results (0)", enabled: false },
	{ label: "Operation (0)", enabled: false },
	{ label: "Notes/Advisory (8)", enabled: true },
	{ label: "All (8)", enabled: true },
];

const MESSAGES = [
	{
		type: "Note",
		code: 1860,
		text: " The consolidated process conditions for Stream 1, prior to the main calculations, give a heat load of -1438.6 kW, for a flow of 11.1724 kg/s, with outlet temperature 95 C and quality (vapor mass fraction) 0.",
	},
	{
		type: "Note",
		code: 1860,
		text: " The consolidated process conditions for Stream 2, prior to the main calculations, give a heat load of 1438.6 kW, for a flow of 68.8758 kg/s, with outlet temperature 35 C and quality (vapor mass fraction) 0.",
	},
	{
		type: "Note",
		code: 1258,
		text: "A nominal baffle cut of 25 percent has given local cuts of 22.2872 and 22.2872 percent, to match the tube line locations. The effective (mean) cut used in the calculations is 22.2872 percent. [for double segmental baffles, this refers to the outer cuts]",
	},
	{
		type: "Advisory",
		code: 1446,
		text: " The Advanced calculation has converged after 20 iterations",
	},
	{
		type: "Advisory",
		code: 1640,
		text: "The shell-side design pressure is greater than that of the tube side.  You may wish to consider putting the high-pressure stream in the tubes to reduce the thickness of the shell.",
	},
	{
		type: "Advisory",
		code: 1641,
		text: "The most fouling fluid is on the shell side. You may wish to put it on the tube side which is usually easier to clean",
	},
	{
		type: "Advisory",
		code: 1644,
		text: "You have a fouling fluid on the shell side but no provision for mechanical cleaning lanes. You may wish to go to a square (or rotated square) layout, or increase the tube pitch.",
	},
	{
		type: "Advisory",
		code: 1645,
		text: "You have a fixed rear head type and a large temperature difference between the streams. You may wish to change to a floating head type (or U tubes) to allow for differences in thermal expansion between the shell and the tubes. The pressure is low enough to use bellows as an alternative.",
	},
];

function MessageTable() {
	return (
		<table className="h-[417px] w-full border-collapse border border-[#5f83a8] text-[15px] leading-[19px] text-black">
			<thead>
				<tr className="h-[26px] bg-black text-[14px] text-white">
					<th colSpan={3} className="w-[190px]" aria-label="Message" />
					<th className="font-bold">Description</th>
				</tr>
			</thead>
			<tbody>
				{MESSAGES.map((message, i) => (
					<tr
						key={i}
						className="h-12 border-b border-black shadow-[inset_0_-2px_0_#9aa3ad] odd:bg-white even:bg-[#dae4f1]"
					>
						<td className="w-14">
							<div className="flex w-14 justify-center">
								{message.type === "Note" ? <NoteIcon /> : <BookIcon />}
							</div>
						</td>
						<td className="w-[77px] text-right">{message.type}</td>
						<td className="w-[57px] border-r border-black pr-[10px] text-right">{message.code}</td>
						<td className="pr-12 pl-[2px] whitespace-pre-wrap">{message.text}</td>
					</tr>
				))}
			</tbody>
		</table>
	);
}

function FilterList() {
	const [selected, setSelected] = useState("Notes/Advisory (8)");

	return (
		<fieldset className="flex h-[157px] w-[203px] shrink-0 flex-col pl-[23px] text-[15px] text-black">
			{FILTERS.map(({ label, enabled }) => (
				<label
					key={label}
					className={`flex flex-1 items-center gap-[5px] ${enabled ? "" : "text-[#7b7b7b]"}`}
				>
					<input
						type="radio"
						name="severity"
						disabled={!enabled}
						checked={selected === label}
						onChange={() => setSelected(label)}
						className="size-[15px] appearance-none rounded-full border border-[#8e8f8f] bg-[#e4e4e4] shadow-[inset_0_0_0_2px_#f8f8f8] checked:bg-[radial-gradient(circle,#3fb0e0,#0b3f70_65%)] checked:shadow-[inset_0_0_0_2px_#e4ecf2] disabled:border-[#b0b3b6]"
					/>
					{label}
				</label>
			))}
		</fieldset>
	);
}

function PageTab({ label, active }: { label: string; active?: boolean }) {
	return (
		<button
			type="button"
			role="tab"
			aria-selected={!!active}
			className={`flex items-center gap-[3px] rounded-t-[3px] border border-b-0 whitespace-nowrap ${
				active
					? "-mb-px h-8 border-[#0a1a8c] bg-white px-[10px] pb-1"
					: "h-[27px] border-[#7d7d7d] bg-linear-to-b from-[#f4f4f4] to-[#d3d3d3] px-[7px]"
			}`}
		>
			<CheckMark />
			{label}
		</button>
	);
}

function DocumentTabs() {
	return (
		<div className="flex h-[43px] items-end">
			<div className="flex h-[39px]">
				<span className="ml-[5px] w-[26px] origin-bottom -skew-x-[32deg] rounded-tl-md border-t border-l border-[#8397b8] bg-[#c2d3eb]" />
				<div className="relative flex w-[138px] justify-between rounded-tr-[4px] border-t border-r border-[#8397b8] bg-[#c2d3eb] pr-[9px] pl-[3px] text-[15px] leading-[19px] font-bold text-black">
					<div>
						<div>Console</div>
						<div className="pl-[13px] whitespace-nowrap">Shell &amp; Tube</div>
					</div>
					<button
						type="button"
						aria-label="Close tab"
						className="absolute top-[7px] right-[9px] h-[9px]"
					>
						<svg viewBox="0 0 10 9" className="h-[9px] w-[10px]" stroke="#8d97a6" strokeWidth="1.8">
							<path d="M1 0l8 9M9 0L1 9" />
						</svg>
					</button>
				</div>
			</div>
			<button
				type="button"
				aria-label="New tab"
				className="mb-[3px] ml-[6px] grid size-4 place-items-center rounded-[3px] bg-[#eef3f9]"
			>
				<svg viewBox="0 0 14 14" className="size-[14px]" stroke="#000" strokeWidth="2">
					<path d="M7 0v14M0 7h14" />
				</svg>
			</button>
			<button type="button" aria-label="Open pages" className="mr-[2px] mb-[28px] ml-auto text-[#1e395b]">
				<Triangle className="w-3" />
			</button>
		</div>
	);
}

function Workspace() {
	return (
		<main className="flex min-w-0 flex-1 flex-col bg-[#cfdcec] font-['Noto_Sans',sans-serif]">
			<DocumentTabs />
			<div className="flex flex-1 flex-col rounded-t-[3px] border border-[#8fa6c4] bg-[#c5daf0] p-1">
				<div className="flex flex-1 flex-col border border-[#8d9bb4] bg-white p-[3px]">
					<div className="flex flex-1 flex-col border border-[#8d9bb4]">
						<div
							role="tablist"
							className="flex h-[35px] items-end border-b border-[#a3a9b3] bg-[#f1f5fa] px-[2px] text-[15px] text-black"
						>
							<PageTab label="Geometry" />
							<PageTab label="Process" />
							<PageTab label="Errors & Warnings" active />
						</div>
						<div className="flex flex-1 bg-white p-[3px]">
							<div className="flex flex-1 items-start bg-linear-to-b from-[#f1f5fa] via-[#e6edf7] to-[#d7e3f0] pt-[22px] pr-[125px]">
								<FilterList />
								<MessageTable />
							</div>
						</div>
					</div>
				</div>
			</div>
		</main>
	);
}

/* ---------- status bar ---------- */

function StatusBar() {
	const [zoom, setZoom] = useState(50);

	return (
		<footer className="flex h-9 items-center border-t border-b-[3px] border-t-[#7f9dc4] border-b-[#f0f0f0] bg-linear-to-b from-[#dbe6f4] to-[#afc2d8] px-1 font-['Noto_Sans',sans-serif] text-black">
			<span className="text-[15px]">Run Shell &amp; Tube completed</span>
			<span className="ml-auto text-[15px] text-[#5a6675]">100%</span>
			<button type="button" aria-label="Zoom out" className="ml-[22px]">
				<svg viewBox="0 0 18 18" className="size-[18px]" fill="none" stroke="#444">
					<circle cx="9" cy="9" r="8" strokeWidth="1.500" />
					<path d="M4 9h10" strokeWidth="2.500" />
				</svg>
			</button>
			<input
				type="range"
				aria-label="Zoom"
				value={zoom}
				onChange={(e) => setZoom(Number(e.target.value))}
				className="mr-2 mb-1 ml-[7px] h-[22px] w-[150px] appearance-none bg-transparent [&::-webkit-slider-runnable-track]:h-1 [&::-webkit-slider-runnable-track]:rounded-full [&::-webkit-slider-runnable-track]:border-t [&::-webkit-slider-runnable-track]:border-b [&::-webkit-slider-runnable-track]:border-t-[#a5adb7] [&::-webkit-slider-runnable-track]:border-b-white [&::-webkit-slider-runnable-track]:bg-[#e2e7ea] [&::-webkit-slider-thumb]:-mt-[10px] [&::-webkit-slider-thumb]:h-[22px] [&::-webkit-slider-thumb]:w-3 [&::-webkit-slider-thumb]:appearance-none [&::-webkit-slider-thumb]:rounded-b-md [&::-webkit-slider-thumb]:border [&::-webkit-slider-thumb]:border-[#777] [&::-webkit-slider-thumb]:bg-[#f2f2f2]"
			/>
			<button type="button" aria-label="Zoom in">
				<svg viewBox="0 0 18 18" className="size-[18px]" fill="none" stroke="#444">
					<circle cx="9" cy="9" r="8" strokeWidth="1.500" />
					<path d="M4 9h10M9 4v10" strokeWidth="2.500" />
				</svg>
			</button>
		</footer>
	);
}

export default function App() {
	return (
		<div className="flex min-h-screen flex-col bg-white font-['Open_Sans','Noto_Sans',sans-serif] text-[#1e395b]">
			<Gradients />
			<TitleBar />
			<RibbonTabs />
			<Ribbon />
			<div className="flex flex-1">
				<Navigator />
				<Workspace />
			</div>
			<StatusBar />
		</div>
	);
}
